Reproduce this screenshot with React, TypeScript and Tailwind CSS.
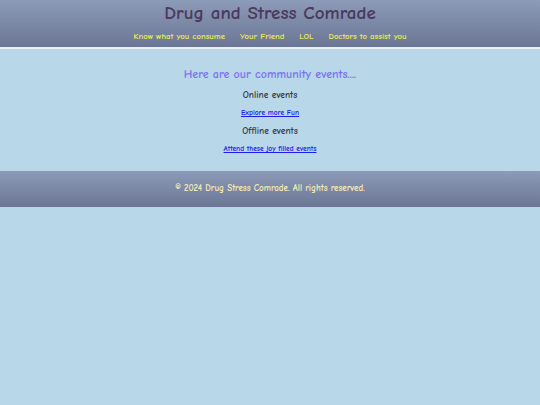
import React from 'react';

const navLinks = ['Know what you consume', 'Your Friend', 'LOL', 'Doctors to assist you'];

export default function App() {
  return (
    <div
      className="min-h-[405px] bg-[#b8d7e8]"
      style={{ fontFamily: '"Comic Sans MS", "Comic Neue", cursive' }}
    >
      <header className="h-[49px] bg-gradient-to-b from-[#8c9bb8] to-[#6b7695] border-b-2 border-[#e9eef0] flex flex-col items-center pt-[2px]">
        <h1 className="text-[19px] leading-[23px] font-bold text-[#4b3a5c]">Drug and Stress Comrade</h1>
        <nav className="mt-[5px] flex gap-[15px] text-[8.7px] leading-[12px] font-bold text-[#e9e94c]">
          {navLinks.map(l => (
            <a key={l} href="#">{l}</a>
          ))}
        </nav>
      </header>

      <main className="flex flex-col items-center pt-[18px] pb-[17px]">
        <h2 className="text-[12px] leading-[14px] font-bold text-[#7b72f0]">Here are our community events....</h2>
        <h3 className="mt-[8px] text-[9.5px] leading-[12px] font-bold text-[#3b3a4c]">Online events</h3>
        <a href="#" className="mt-[7px] text-[7.5px] leading-[10px] font-bold text-[#1c1cee] underline">Explore more Fun</a>
        <h3 className="mt-[7px] text-[9.5px] leading-[12px] font-bold text-[#3b3a4c]">Offline events</h3>
        <a href="#" className="mt-[7px] text-[7.5px] leading-[10px] font-bold text-[#1c1cee] underline">Attend these joy filled events</a>
      </main>

      <footer className="h-[36px] bg-gradient-to-b from-[#8c9bb8] to-[#6b7695] flex items-center justify-center">
        <p className="text-[9px] font-bold text-[#f2eab2]">© 2024 Drug Stress Comrade. All rights reserved.</p>
      </footer>
    </div>
  );
}
